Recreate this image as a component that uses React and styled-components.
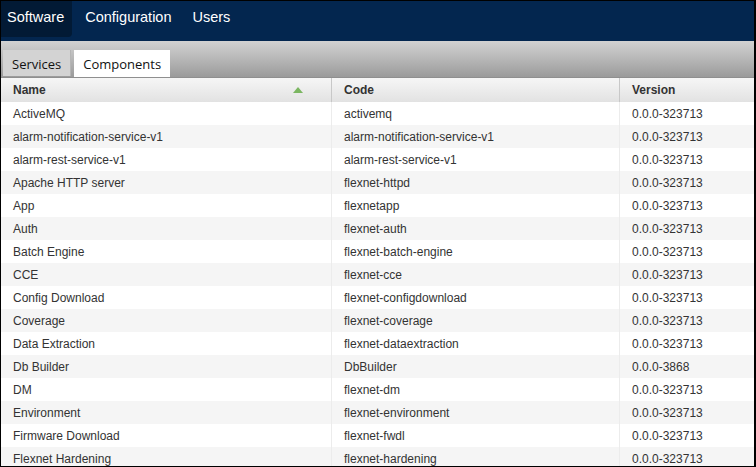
import React from 'react';
import styled, { createGlobalStyle } from 'styled-components';

const Global = createGlobalStyle`
  html, body { margin: 0; padding: 0; background: #fff; }
  body { font-family: "Liberation Sans", Arial, sans-serif; }
`;

const Frame = styled.div`
  box-sizing: border-box;
  width: 756px;
  height: 467px;
  border: 1px solid #000;
  border-right-width: 2px;
  overflow: hidden;
  display: flex;
  flex-direction: column;
`;

const NavBar = styled.nav`
  height: 40px;
  background: #03264f;
  display: flex;
  align-items: flex-start;
  flex-shrink: 0;
`;

const NavItem = styled.div`
  height: 36px;
  padding: 8px 8px 0 6px;
  box-sizing: border-box;
  margin-right: 7px;
  color: #fff;
  font-size: 14.5px;
  background: ${p => (p.active ? '#021a35' : 'transparent')};
  border-bottom-right-radius: ${p => (p.active ? '4px' : '0')};
`;

const TabBar = styled.div`
  height: 36px;
  flex-shrink: 0;
  background: linear-gradient(#d2d2d2, #9b9b9b);
  display: flex;
  align-items: flex-end;
  padding-left: 2px;
  gap: 3px;
`;

const Tab = styled.div`
  height: ${p => (p.active ? '27px' : '26px')};
  box-sizing: border-box;
  padding: 5px 9px 0 9px;
  font-family: "Open Sans", "Noto Sans", sans-serif;
  font-size: 13px;
  color: #111;
  background: ${p => (p.active ? '#fff' : '#d3d3d3')};
  border-right: ${p => (p.active ? 'none' : '1px solid #b5b5b5')};
  margin-bottom: ${p => (p.active ? '0' : '1px')};
`;

const Table = styled.div`
  flex: 1;
  display: grid;
  grid-template-columns: 330px 288px 1fr;
  grid-template-rows: 24px;
  grid-auto-rows: 23px;
  font-size: 12px;
  color: #333;
  border-top: 1px solid #8f8f8f;
`;

const Head = styled.div`
  display: flex;
  align-items: center;
  justify-content: space-between;
  padding: 0 12px;
  font-weight: bold;
  background: linear-gradient(#f6f6f6, #e2e2e2);
  border-left: ${p => (p.first ? 'none' : '1px solid #c8c8c8')};
`;

const SortArrow = styled.span`
  width: 0;
  height: 0;
  margin-right: 16px;
  border-left: 5px solid transparent;
  border-right: 5px solid transparent;
  border-bottom: 6px solid #7bb661;
`;

const Cell = styled.div`
  display: flex;
  align-items: center;
  padding: 0 12px;
  white-space: nowrap;
  background: ${p => (p.odd ? '#f5f5f5' : '#fff')};
  border-left: ${p => (p.first ? 'none' : '1px solid #ececec')};
`;

const rows = [
  ['ActiveMQ', 'activemq', '0.0.0-323713'],
  ['alarm-notification-service-v1', 'alarm-notification-service-v1', '0.0.0-323713'],
  ['alarm-rest-service-v1', 'alarm-rest-service-v1', '0.0.0-323713'],
  ['Apache HTTP server', 'flexnet-httpd', '0.0.0-323713'],
  ['App', 'flexnetapp', '0.0.0-323713'],
  ['Auth', 'flexnet-auth', '0.0.0-323713'],
  ['Batch Engine', 'flexnet-batch-engine', '0.0.0-323713'],
  ['CCE', 'flexnet-cce', '0.0.0-323713'],
  ['Config Download', 'flexnet-configdownload', '0.0.0-323713'],
  ['Coverage', 'flexnet-coverage', '0.0.0-323713'],
  ['Data Extraction', 'flexnet-dataextraction', '0.0.0-323713'],
  ['Db Builder', 'DbBuilder', '0.0.0-3868'],
  ['DM', 'flexnet-dm', '0.0.0-323713'],
  ['Environment', 'flexnet-environment', '0.0.0-323713'],
  ['Firmware Download', 'flexnet-fwdl', '0.0.0-323713'],
  ['Flexnet Hardening', 'flexnet-hardening', '0.0.0-323713'],
];

export default function App() {
  return (
    <>
      <Global />
      <Frame>
        <NavBar>
          <NavItem active>Software</NavItem>
          <NavItem>Configuration</NavItem>
          <NavItem>Users</NavItem>
        </NavBar>
        <TabBar>
          <Tab>Services</Tab>
          <Tab active>Components</Tab>
        </TabBar>
        <Table>
          <Head first>Name<SortArrow /></Head>
          <Head>Code</Head>
          <Head>Version</Head>
          {rows.map((r, i) =>
            r.map((v, j) => (
              <Cell key={i + '-' + j} odd={i % 2 === 1} first={j === 0}>{v}</Cell>
            ))
          )}
        </Table>
      </Frame>
    </>
  );
}
